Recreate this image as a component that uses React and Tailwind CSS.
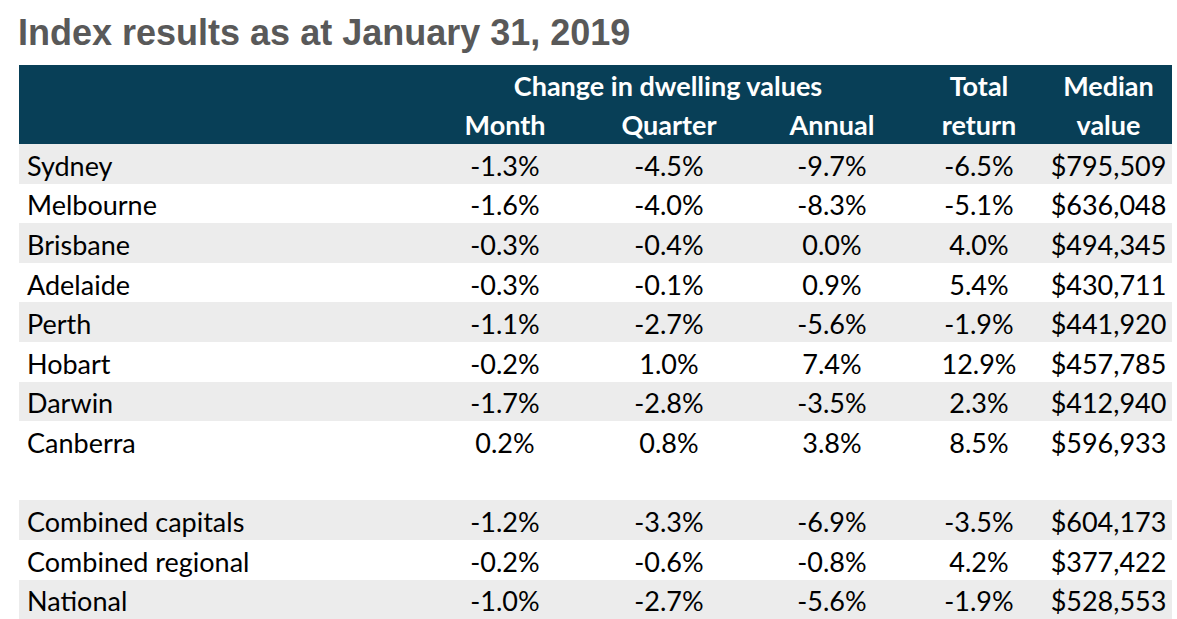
import React from 'react';

const rows = [
  ['Sydney', '-1.3%', '-4.5%', '-9.7%', '-6.5%', '$795,509'],
  ['Melbourne', '-1.6%', '-4.0%', '-8.3%', '-5.1%', '$636,048'],
  ['Brisbane', '-0.3%', '-0.4%', '0.0%', '4.0%', '$494,345'],
  ['Adelaide', '-0.3%', '-0.1%', '0.9%', '5.4%', '$430,711'],
  ['Perth', '-1.1%', '-2.7%', '-5.6%', '-1.9%', '$441,920'],
  ['Hobart', '-0.2%', '1.0%', '7.4%', '12.9%', '$457,785'],
  ['Darwin', '-1.7%', '-2.8%', '-3.5%', '2.3%', '$412,940'],
  ['Canberra', '0.2%', '0.8%', '3.8%', '8.5%', '$596,933'],
  null,
  ['Combined capitals', '-1.2%', '-3.3%', '-6.9%', '-3.5%', '$604,173'],
  ['Combined regional', '-0.2%', '-0.6%', '-0.8%', '4.2%', '$377,422'],
  ['National', '-1.0%', '-2.7%', '-5.6%', '-1.9%', '$528,553'],
];

// rows with the grey band
const shaded = [0, 2, 4, 6, 9, 11];

const cols = 'grid grid-cols-[404px_164px_164px_162px_132px_127px]';

const App = () => {
  return (
    <div className="w-[1177px] h-[619px] bg-white overflow-hidden" style={{ fontFamily: 'Lato, "Open Sans", sans-serif' }}>
      <h1
        className="pl-[18px] pt-[15px] h-[65px] text-[36px] leading-[36px] font-bold text-[#595959]"
        style={{ fontFamily: '"Liberation Sans", Arial, sans-serif' }}
      >
        Index results as at January 31, 2019
      </h1>

      <div className="ml-[19px] w-[1153px]">
        {/* header */}
        <div className={`${cols} h-[79px] bg-[#083f57] text-white font-bold text-[27px] leading-[39px] pt-[1px]`}>
          <div />
          <div className="col-span-3 text-center">Change in dwelling values</div>
          <div className="text-center">Total</div>
          <div className="text-center">Median</div>
          <div />
          <div className="text-center">Month</div>
          <div className="text-center">Quarter</div>
          <div className="text-center">Annual</div>
          <div className="text-center">return</div>
          <div className="text-center">value</div>
        </div>

        {/* body */}
        {rows.map((r, i) => (
          <div
            key={i}
            className={`${cols} h-[39.6px] items-center text-[27px] leading-[28px] text-black pt-[4px] ${shaded.includes(i) ? 'bg-[#ececec]' : 'bg-white'}`}
          >
            {r && (
              <>
                <div className="pl-2">{r[0]}</div>
                <div className="text-center">{r[1]}</div>
                <div className="text-center">{r[2]}</div>
                <div className="text-center">{r[3]}</div>
                <div className="text-center">{r[4]}</div>
                <div className="text-center">{r[5]}</div>
              </>
            )}
          </div>
        ))}
      </div>
    </div>
  );
};

export default App;
